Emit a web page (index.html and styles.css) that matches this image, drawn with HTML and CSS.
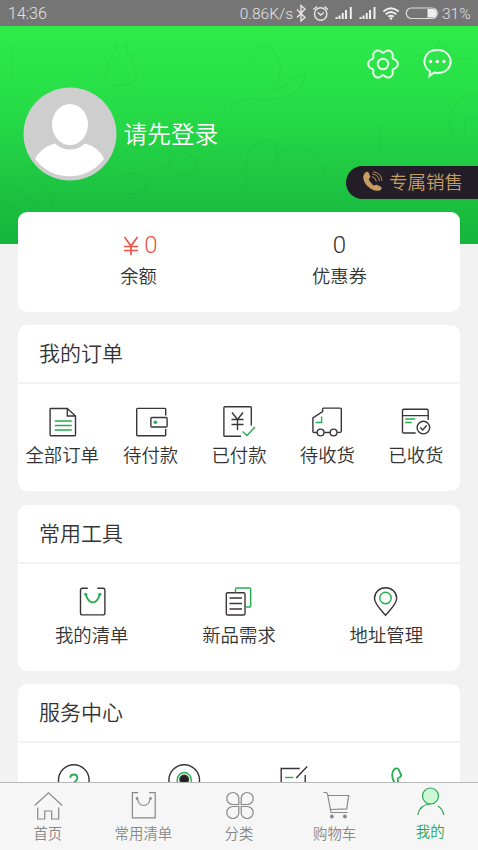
FILE: index.html
```html
<!DOCTYPE html>
<html lang="zh-CN">
<head>
<meta charset="utf-8">
<title>我的</title>
<link rel="stylesheet" href="styles.css">
</head>
<body>
<div class="screen">
  <div class="status">
    <span class="time">14:36</span>
    <span class="speed">0.86K/s</span>
    <svg class="status-icons" viewBox="295 0 145 26">
      <path d="M297 9.500l8 8-4 3.500V5.500l4 3.500-8 8.500" fill="none" stroke="#e6e6e6" stroke-width="1.400"/>
      <g fill="none" stroke="#e6e6e6" stroke-width="1.400"><circle cx="320.700" cy="14" r="6.200"/><path d="M317.800 12.500l3 2.500 3-2.500M313.500 9.500l3.500-3M328 9.500l-3.500-3"/></g>
      <path d="M336.500 19v-2M339.500 19v-3.500M342.700 19v-6M346 19V10M350.800 19V7" stroke="#eee" stroke-width="2"/>
      <path d="M360.500 19v-2M363.500 19v-3.500M366.700 19v-6M370 19V10M374.500 19V7" stroke="#eee" stroke-width="2"/>
      <g fill="none" stroke="#eee" stroke-width="1.900"><path d="M383.300 11.500q7.700-6.500 15.400 0M385.800 14.300q5.200-4.500 10.400 0M388.300 16.800q2.700-2.300 5.400 0"/></g>
      <circle cx="391" cy="18.500" r="1.300" fill="#eee"/>
      <rect x="406.300" y="8" width="31" height="10.500" rx="5.200" fill="none" stroke="#ddd" stroke-width="1.200"/>
      <path d="M427.500 9h5a4.200 4.200 0 0 1 0 8.500h-5z" fill="#eee"/>
    </svg>
    <span class="battery">31%</span>
  </div>

  <header class="hero">
    <svg class="doodles" viewBox="0 26 478 218">
      <path d="M118 42c-3 15-13 20-12 32s9 12 17 11 15-4 13-14-10-14-10-29M8 45q10 8 2 35M0 190q18-22 38-8t12 28q-22 8-50-8M10 185l28 20M115 180q22-14 30 0t-18 14M168 165c6-20 20-15 28-3s-14 20-28 3M250 60q14-28 26-5t-10 40q22-12 40-22-5 28-42 26t-32 12M248 190q-8-40 12-48t16 22q14-30 32-14t18 30M440 40q-8 20-26 14m28-10q12 20 30 14M454 140q-12-30 12-44l12-2M465 140v-22h13M380 150v-26M345 225q30-12 72 4"/>
    </svg>
    <svg class="avatar" viewBox="0 0 94 94">
      <circle cx="47" cy="47" r="46.500" fill="#cecece"/>
      <ellipse cx="47" cy="37.500" rx="18" ry="20.500" fill="#fff"/>
      <path d="M12 72Q18 60 32 56.500q6 6 15 6t15-6Q76 60 81 72A43 43 0 0 1 12 72Z" fill="#fff"/>
    </svg>
    <div class="login">请先登录</div>
    <div class="actions">
      <svg class="gear" viewBox="-17 -16 34 32">
        <path d="M9.800-5.650C10.500-4.450 12.200-4.600 13.200-3.600Q15-1.500 15 0Q15 1.500 13.200 3.600C12.200 4.600 10.500 4.450 9.800 5.650"/>
        <path transform="rotate(60)" d="M9.800-5.650C10.500-4.450 12.200-4.600 13.200-3.600Q15-1.500 15 0Q15 1.500 13.200 3.600C12.200 4.600 10.500 4.450 9.800 5.650"/>
        <path transform="rotate(120)" d="M9.800-5.650C10.500-4.450 12.200-4.600 13.200-3.600Q15-1.500 15 0Q15 1.500 13.200 3.600C12.200 4.600 10.500 4.450 9.800 5.650"/>
        <path transform="rotate(180)" d="M9.800-5.650C10.500-4.450 12.200-4.600 13.200-3.600Q15-1.500 15 0Q15 1.500 13.200 3.600C12.200 4.600 10.500 4.450 9.800 5.650"/>
        <path transform="rotate(240)" d="M9.800-5.650C10.500-4.450 12.200-4.600 13.200-3.600Q15-1.500 15 0Q15 1.500 13.200 3.600C12.200 4.600 10.500 4.450 9.800 5.650"/>
        <path transform="rotate(300)" d="M9.800-5.650C10.500-4.450 12.200-4.600 13.200-3.600Q15-1.500 15 0Q15 1.500 13.200 3.600C12.200 4.600 10.500 4.450 9.800 5.650"/>
        <circle r="5.300"/>
      </svg>
      <svg class="chat" viewBox="422 47 32 32"><path d="M430 71.500c-10-7-6-21.500 7.500-21.500 17 0 18 23 0 23q-2 0-3.500-.5l-4.500 3.500z"/><g fill="#fff" stroke="none"><circle cx="430.500" cy="61.500" r="1.700"/><circle cx="437.300" cy="61.500" r="1.700"/><circle cx="444" cy="61.500" r="1.700"/></g></svg>
    </div>
    <div class="sales">
      <svg viewBox="362 171 22 22"><path d="M366.500 171.800l1.800.2 2 4.500-1.500 3.500 4.500 5.500 3.500-.8 4.500 2.300q1 2-1 3.300c-8 3-18-7-17-14q.5-3.500 3.200-4.500z" fill="#c69d62"/><path d="M372 176.500q3.500 1 4.500 5M372.500 174q6 .7 7 7M373 171.800q8 .7 9 9" fill="none" stroke="#b58e58" stroke-width="1"/></svg>
      <span>专属销售</span>
    </div>
  </header>

  <main class="cards">
    <section class="card wallet">
      <div class="amount"><b class="red"><svg class="yen" viewBox="0 0 16 19"><path d="M1.500 1L8 10l6.500-9M8 10v9M1 10.500h14M1 14.500h14"/></svg>0</b><span>余额</span></div>
      <div class="amount"><b>0</b><span>优惠券</span></div>
    </section>

    <section class="card">
      <h2>我的订单</h2>
      <div class="grid">
        <div class="cell"><svg viewBox="44.200 404 36 36"><path d="M67.500 408.500H51q-.7 0-.7.700V435q0 .7.700.700h24q.7 0 .7-.7V416zM67.500 408.500v7.500h8"/><path class="g" d="M55 421h17M55 425.500h17M55 430h17"/></svg><span>全部订单</span></div>
        <div class="cell"><svg viewBox="132.600 404 36 36"><path d="M165.300 415.500v-6.300q0-.8-.8-.8H137.100q-.8 0-.8.800V435q0 .7.800.700h27.400q.8 0 .8-.7v-6"/><rect x="150.500" y="417.500" width="16.200" height="9.500" rx="1"/><circle class="dot" cx="155" cy="422.200" r="1.800"/></svg><span>待付款</span></div>
        <div class="cell"><svg viewBox="221 404 36 36"><path d="M251.300 425.500V407.700q0-.9-.9-.9H224.800q-.9 0-.9.9v27.700q0 .9.900.900H241M232 412.500l5.500 7 5.500-7M237.500 419.500V430M231.500 419.500h12M231.500 424.500h12"/><path class="g" d="M242.500 431.500l4.500 4 8-8.500"/></svg><span>已付款</span></div>
        <div class="cell"><svg viewBox="309.400 404 36 36"><path d="M317.500 432.500h-3q-1.200 0-1.200-1V418l9.700-6.300v-2.600q0-1 1-1h16.500q1.200 0 1.200 1v22q0 1.300-1.200 1.300h-3M324.500 432.500h6"/><circle cx="321" cy="432.500" r="3.400"/><circle cx="334" cy="432.500" r="3.400"/><path class="g" d="M316 422.500h6v-6"/></svg><span>待收货</span></div>
        <div class="cell"><svg viewBox="397.800 404 36 36"><path d="M415.500 433h-12q-1.200 0-1.200-1v-21.500q0-1.300 1.200-1.300h23.300q1.200 0 1.200 1.300V420M402.300 415.600H428"/><circle cx="423.200" cy="427.600" r="6.300"/><path d="M420 427.500l2.500 2.500 4-4.500"/><path class="g" d="M405 419h10M405 422.500h6.500"/></svg><span>已收货</span></div>
      </div>
    </section>

    <section class="card">
      <h2>常用工具</h2>
      <div class="grid">
        <div class="cell"><svg viewBox="73.700 583.500 36 36"><path d="M87.500 587.700h-5.300q-2 0-2 2v22.700q0 2 2 2h20.400q2 0 2-2v-22.700q0-2-2-2H97"/><path class="g smile" d="M85.500 593.500q2 8.300 7 8.300t7-8.300"/><circle class="dot" cx="85.400" cy="593.800" r="1.500"/><circle class="dot" cx="99.600" cy="593.800" r="1.500"/></svg><span>我的清单</span></div>
        <div class="cell"><svg viewBox="221 583.500 36 36"><rect x="226.300" y="592.200" width="18.700" height="22.300" rx="1.500"/><path d="M229.500 597.500H242M229.500 603H242M229.500 608.500H242"/><path class="g" d="M235.500 592v-3.300q0-1.200 1.200-1.200h12.800q1.200 0 1.200 1.200v16.500q0 1.300-1.200 1.300H245"/></svg><span>新品需求</span></div>
        <div class="cell"><svg viewBox="368.300 583.500 36 36"><path d="M385.800 614.800c-4-5-11-11-11-17a11 10.500 0 0 1 22.200 0c0 6-7 12-11.200 17z"/><circle class="g" cx="385.800" cy="597.500" r="5.700"/></svg><span>地址管理</span></div>
      </div>
    </section>

    <section class="card">
      <h2>服务中心</h2>
      <div class="grid">
        <div class="cell"><svg viewBox="55.200 763 36 36"><circle cx="74" cy="780" r="15.300"/><path class="g bold" d="M70.500 778q0-3.500 3.500-3.500t3.500 3.500q0 2-2 3.500t-1.500 4"/></svg></div>
        <div class="cell"><svg viewBox="165.800 763 36 36"><circle cx="184" cy="780" r="15.300"/><circle cx="184" cy="779.500" r="4.300" fill="#222"/><path class="g" d="M177 782v-2a7 7.500 0 0 1 14 0v2"/></svg></div>
        <div class="cell"><svg viewBox="276.300 763 36 36"><path d="M300 768.500h-18.500V795H305.500V775M296.500 778l11-11.500"/><path class="g" d="M285.500 777.500h8"/></svg></div>
        <div class="cell"><svg viewBox="386.800 763 36 36"><path class="g bold" d="M396.500 786q-6-8-4-14 1.500-4.500 5-3.500 1 .5 2 3.500l1.500 3q.3 2-3 3-1.500 2 2 7"/></svg></div>
      </div>
    </section>
  </main>

  <nav class="tabs">
    <div class="tab"><svg viewBox="31.800 787.500 32 32"><path d="M34.500 805l13.800-12.800L62 805M37.500 807v11.500h7V810.500h7v8h7V807"/></svg><span>首页</span></div>
    <div class="tab"><svg viewBox="127.400 787.500 32 32"><path d="M138.500 792.200h-5.700v25.200h22.800v-25.200h-6.100M138 798.500q1 6.500 6.200 6.500t6.200-6.500"/><circle cx="137.500" cy="798" r=".8"/><circle cx="150.900" cy="798" r=".8"/></svg><span>常用清单</span></div>
    <div class="tab"><svg viewBox="223 787.500 32 32"><path d="M238.800 804h-6a6 6 0 1 1 6-6zM241.200 804h6a6 6 0 1 0-6-6zM238.800 806h-6a6 6 0 1 0 6 6zM241.200 806h6a6 6 0 1 1-6 6z"/></svg><span>分类</span></div>
    <div class="tab"><svg viewBox="318.600 787.500 32 32"><path d="M323 792h2.800q1 0 1.300 1.500l3.500 18.500h16.700M327.500 795h20.800l-2 13.300-16 .7"/><circle cx="331.500" cy="816" r="1.300" fill="#888"/><circle cx="344.500" cy="816" r="1.300" fill="#888"/></svg><span>购物车</span></div>
    <div class="tab active"><svg viewBox="414.200 787.500 32 32"><circle cx="430.700" cy="796.500" r="8" fill="#ccf9d4"/><path d="M418 815.500q2-10.500 12.500-11M438 806.500q5 3 6 9"/></svg><span>我的</span></div>
  </nav>
</div>
</body>
</html>
```
FILE: styles.css
```css
* { box-sizing: border-box; }
body {
  margin: 0;
  background: #f2f2f2;
  color: #333;
  font-family: "Noto Sans CJK SC", sans-serif;
  font-weight: 350;
}
svg { display: block; flex: none; }
.screen {
  height: 850px;
  overflow: hidden;
  display: flex;
  flex-direction: column;
}
.status {
  flex: none;
  height: 26px;
  display: flex;
  align-items: center;
  background: #757575;
  color: #e2e2e2;
  font: 300 16px/28px Roboto, sans-serif;
  padding: 2px 8px 0;
}
.speed { margin-left: auto; font-size: 15.500px; }
.status-icons { width: 145px; height: 26px; margin: -2px 2px 0 2px; }
.battery { font-size: 15.500px; width: 28px; }
.hero {
  flex: none;
  position: relative;
  height: 218px;
  background: linear-gradient(#2eeb49, #26dc47 38%, #1bbf40 82%, #15b53d);
}
.doodles {
  position: absolute;
  inset: 0;
  width: 478px;
  height: 218px;
  fill: none;
  stroke: rgba(0, 100, 30, .03);
  stroke-width: 2;
}
.avatar { position: absolute; left: 23px; top: 61px; width: 94px; height: 94px; }
.login {
  position: absolute;
  left: 123.500px;
  top: 90px;
  color: #fff;
  font-size: 23.700px;
  line-height: 34px;
}
.actions {
  position: absolute;
  right: 24px;
  top: 21px;
  display: flex;
  gap: 22px;
  fill: none;
  stroke: #e9ffeb;
  stroke-width: 2;
}
.gear { width: 34px; height: 32px; margin-top: 1px; }
.chat { width: 32px; height: 32px; }
.sales {
  position: absolute;
  right: 0;
  top: 140px;
  width: 132px;
  height: 33px;
  padding-left: 16px;
  display: flex;
  align-items: center;
  gap: 5px;
  border-radius: 17px 0 0 17px;
  background: #231d27;
  color: #c69d62;
  font-size: 18.500px;
  line-height: 31px;
}
.sales svg { width: 22px; height: 22px; margin-top: -2px; }
.sales span { margin-top: -2px; }
.cards {
  flex: 1;
  min-height: 0;
  overflow: hidden;
  position: relative;
  margin-top: -32px;
  padding: 0 18px;
}
.card {
  height: 166px;
  margin-bottom: 13.500px;
  border-radius: 9px;
  background: #fff;
  overflow: hidden;
}
.wallet {
  height: 100px;
  margin-bottom: 13px;
  padding: 18px 20px 0;
  display: flex;
}
.amount {
  flex: 1;
  display: flex;
  flex-direction: column;
  align-items: center;
  font-size: 18.300px;
  line-height: 29px;
}
.amount b {
  display: flex;
  align-items: center;
  font: 300 24px/31px Roboto, sans-serif;
}
.amount .red { color: #ed5444; padding-left: 4px; }
.yen { width: 16px; height: 19px; margin: 0 5px 0 0; fill: none; stroke: currentColor; stroke-width: 1.700; }
h2 {
  margin: 0;
  height: 59px;
  padding-left: 21px;
  border-bottom: 2px solid #f3f3f3;
  font-size: 21px;
  font-weight: 350;
  line-height: 55px;
}
.grid { display: flex; padding-top: 20px; }
.cell {
  flex: 1;
  display: flex;
  flex-direction: column;
  align-items: center;
  font-size: 18.400px;
  line-height: 28px;
  white-space: nowrap;
}
.cell svg {
  width: 36px;
  height: 36px;
  fill: none;
  stroke: #3a3538;
  stroke-width: 1.400;
}
.cell .g { stroke: #25ad50; }
.cell .smile, .cell .bold { stroke-width: 1.800; }
.cell .dot { fill: #25ad50; stroke: none; }
.tabs {
  flex: none;
  height: 68px;
  display: flex;
  border-top: 1.500px solid #b8b8b8;
  background: #f6f6f6;
}
.tab {
  flex: 1;
  display: flex;
  flex-direction: column;
  align-items: center;
  padding-top: 5px;
  color: #888;
  font-size: 14.400px;
  line-height: 20px;
}
.tab svg {
  width: 32px;
  height: 32px;
  margin-bottom: 3px;
  fill: none;
  stroke: currentColor;
  stroke-width: 1.200;
}
.tab.active { color: #2aa452; padding-top: 4px; }
.tab.active svg { margin-bottom: 2px; }
```
